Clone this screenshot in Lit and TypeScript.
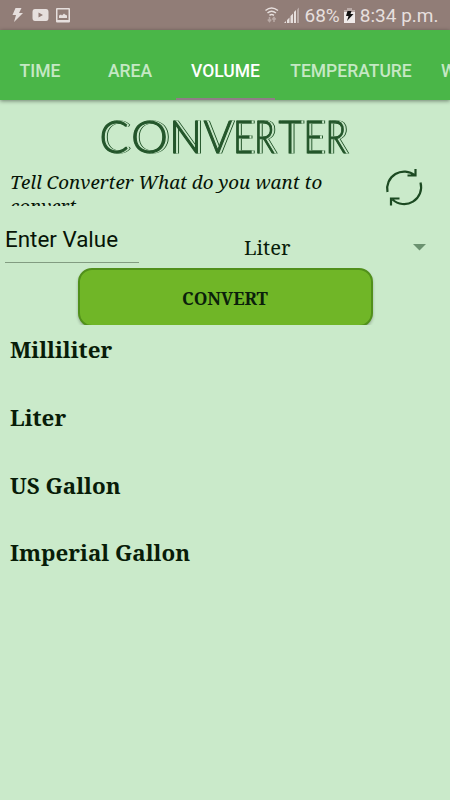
import { LitElement, html, svg, css } from "lit";
import { customElement, state } from "lit/decorators.js";

const TITLE: [string, number, number][] = [
  ["C", 99.5, 29], ["O", 131, 37], ["N", 169, 33], ["V", 203.5, 28.5], ["E", 233, 20],
  ["R", 254, 20.5], ["T", 278.5, 23], ["E", 303.5, 20], ["R", 325.5, 20.5],
];

@customElement("app-root")
export class AppRoot extends LitElement {
  @state() private active = "VOLUME";
  private tabs = ["TIME", "AREA", "VOLUME", "TEMPERATURE", "WEIGHT"];
  private units = ["Milliliter", "Liter", "US Gallon", "Imperial Gallon"];

  static styles = css`
    :host {
      display: flex; flex-direction: column; width: 450px; height: 800px;
      overflow: hidden; background: #caeaca; color: #081c08;
      font-family: "Noto Serif", "DejaVu Serif Condensed", "DejaVu Serif", serif;
    }
    * { box-sizing: border-box; }
    svg { display: block; flex: none; }
    .status {
      height: 30px; flex: none; background: #917d77; color: #e6dfdd;
      display: flex; align-items: center; justify-content: space-between;
      font: 19px/30px Roboto, sans-serif; padding: 2px 11.5px 0 0;
    }
    .status svg { margin-top: -2px; }
    .clock { display: flex; align-items: center; white-space: pre; }
    .clock .battery { margin: -2px 5px 0 4px; }
    .tabs {
      height: 70px; flex: none; background: #4ab648; display: flex;
      box-shadow: 0 1px 4px rgba(0, 0, 0, .45); position: relative;
      font: 500 17.5px/20px Roboto, sans-serif; color: #c5e8c4;
      padding-top: 12px;
    }
    .tab { flex: none; height: 58px; padding-top: 19px; text-align: center; white-space: nowrap; }
    .tab:nth-child(1) { width: 80px; }
    .tab:nth-child(2) { width: 96px; padding-left: 4px; }
    .tab:nth-child(3) { width: 99px; }
    .tab:nth-child(4) { width: 152px; }
    .tab:nth-child(5) { width: 23px; padding-left: 14px; text-align: left; overflow: hidden; }
    .on { color: #fff; border-bottom: 2px solid #917d87; }
    .title { height: 66px; flex: none; }
    .title text { font: 300 46px Lato, sans-serif; fill: #24562b; stroke: #24562b; stroke-width: 1.1px; }
    .title .deco { filter: drop-shadow(2.2px .8px 0 #caeaca) drop-shadow(1px .3px 0 #24562b); }
    .prompt { display: flex; height: 43px; flex: none; justify-content: space-between; padding: 0 26px 0 10px; }
    .prompt p {
      margin: 3px 0 0; width: 340px; height: 37px; overflow: hidden; padding-top: 1px;
      font-style: italic; font-size: 18.8px; line-height: 24px; color: #061406;
    }
    .entry { display: flex; height: 59px; flex: none; }
    .field {
      margin: 13px 0 0 5px; width: 134px; height: 41px; border-bottom: 1.5px solid #829c81;
      font: 22.4px/35px Roboto, sans-serif; color: #061406;
    }
    .select { flex: 1; display: flex; align-items: center; justify-content: space-between; padding: 18px 24px 0 105px; font-size: 20.2px; height: 59px; }
    .select span { margin-top: -2px; }
    .cut { height: 57px; flex: none; overflow: hidden; display: flex; justify-content: center; }
    .button {
      width: 295px; height: 59px; flex: none; border: 2.5px solid #51901b; border-radius: 14px;
      background: #70b627; font-weight: 700; font-size: 17.4px; line-height: 54px;
      text-align: center; box-shadow: 0 2px 3px rgba(0, 0, 0, .25);
      font-family: inherit; color: #0b1f0b; padding: 1px 0 0;
    }
    .list { margin: 0; padding: 0 10px; list-style: none; font-weight: 700; font-size: 22.4px; }
    .list li { height: 67.8px; line-height: 49px; }
  `;

  render() {
    return html`
      <header class="status">
        <svg width="80" height="30" viewBox="0 0 80 30" fill="#e6dfdd">
          <path d="M15.500 8h6l-2.500 5h4l-9 9 2-7h-3.500z"/>
          <path fill-rule="evenodd" d="M35 9h11q2.500 0 2.500 3v6q0 3-2.500 3H35q-2.500 0-2.500-3v-6q0-3 2.500-3zM38.500 12.500v5l4.500-2.500z"/>
          <path fill-rule="evenodd" d="M57 8h12q1 0 1 1v12.500q0 1-1 1H57q-1 0-1-1V9q0-1 1-1zM57.500 9.500v10.500h11V9.500z"/>
          <path d="M59 18v-2.500l2-1 1 1 2-2 1 1 2 1v2.500z"/>
        </svg>
        <div class="clock">
          <svg width="40" height="30" viewBox="0 0 40 30" fill="none" stroke="#e6dfdd" stroke-width="1.500">
            <path d="M.5 10.500q6-5 12.500 0M2.500 13q4-3.500 8.500 0M4.500 15.300q2-1.500 4.500 0"/>
            <path stroke="#b9aaa6" d="M4.500 17v4M2.800 19.500l1.700 2 1.700-2M9 22v-4M7.300 19.500l1.700-2 1.700 2"/>
            <path stroke="none" fill="#e6dfdd" d="M19 23l2-2v2zM22 23v-3l2.500-2.500V23zM25.500 23v-7l2.500-2.500V23zM29 23V12l2-2v13z"/>
            <path stroke="none" fill="#b9aaa6" d="M32 23V9.500l2-2V23z"/>
          </svg><span>68%</span>
          <svg class="battery" width="11" height="30" viewBox="0 0 11 30">
            <path fill="#b9aaa6" d="M3 8h5v2h3v3H0v-3h3z"/><path fill="#f0ebea" d="M0 12h11v11H0z"/>
            <path fill="#111" d="M3.500 11h4l-1 3H9.500L3 21l1.500-5H2z"/>
          </svg><span>8:34 p.m.</span>
        </div>
      </header>
      <nav class="tabs">
        ${this.tabs.map(t => html`<div class="tab ${t === this.active ? "on" : ""}" @click=${() => (this.active = t)}>${t}</div>`)}
      </nav>
      <svg class="title" width="450" height="66" viewBox="0 0 450 66">
        <g class="deco"><text y="52.500">${TITLE.map(([c, x, w]) => svg`<tspan x=${x} textLength=${w} lengthAdjust="spacingAndGlyphs">${c}</tspan>`)}</text></g>
      </svg>
      <section class="prompt">
        <p>Tell Converter What do you want to convert</p>
        <svg width="40" height="43" viewBox="0 0 40 43" fill="none" stroke="#1c4a22" stroke-width="2.200">
          <path d="M3.500 26A17 17 0 0 1 31 9.500M31.500 3V9.500H23.500M36.500 16.500A17 17 0 0 1 8.500 33.500M7 39.500V32.500H15.500"/>
        </svg>
      </section>
      <section class="entry">
        <div class="field">Enter Value</div>
        <div class="select"><span>Liter</span>
          <svg width="13" height="7" viewBox="0 0 13 7"><path fill="#6b9270" d="M0 0h13L6.500 6.500z"/></svg>
        </div>
      </section>
      <div class="cut"><button class="button">CONVERT</button></div>
      <ul class="list">${this.units.map(u => html`<li>${u}</li>`)}</ul>
    `;
  }
}
